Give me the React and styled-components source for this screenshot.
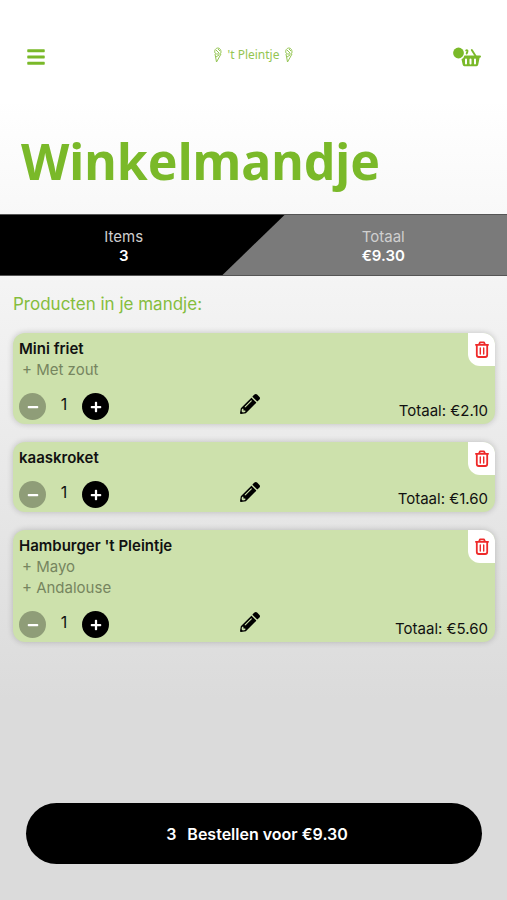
import React from "react";
import styled, { createGlobalStyle } from "styled-components";
import { FaPencilAlt, FaPlus, FaMinus, FaBars } from "react-icons/fa";

const GlobalStyle = createGlobalStyle`
  *, *::before, *::after { box-sizing: border-box; }
  body {
    margin: 0;
    font-family: Inter, "Liberation Sans", sans-serif;
    font-size: 15px;
    line-height: 20px;
    color: #111;
  }
  h1, h2, h3, p, ul { margin: 0; padding: 0; }
  button { font: inherit; border: 0; padding: 0; cursor: pointer; }
`;

const Page = styled.div`
  min-height: 100vh;
  display: flex;
  flex-direction: column;
  background: linear-gradient(#fff 100px, #dbdbdb 700px);
`;

const TopBar = styled.header`
  display: grid;
  grid-template-columns: 1fr auto 1fr;
  align-items: center;
  height: 104px;
  padding: 10px 26px 0;
  background: #fff;
  color: #7ab929;
`;

const IconButton = styled.button`
  display: flex;
  align-items: center;
  justify-self: ${(p) => p.$side};
  background: none;
  color: inherit;
`;

const Brand = styled.a`
  display: flex;
  align-items: center;
  gap: 6px;
  padding-bottom: 4px;
  font: 12px/16px "Noto Sans", sans-serif;
  color: #94c552;
  text-decoration: none;
`;

const Title = styled.h1`
  padding: 25px 21px 21px;
  font: 700 50px/64px "Noto Sans", sans-serif;
  color: #7ab929;
`;

const Summary = styled.section`
  display: grid;
  grid-template-columns: 1fr 1fr;
  height: 62px;
  border: solid #555;
  border-width: 1px 0;
  background: #7a7a7a;
  position: relative;
  isolation: isolate;
  &::before {
    content: "";
    position: absolute;
    z-index: -1;
    inset: 0 calc(50% - 31px) 0 0;
    background: #000;
    clip-path: polygon(0 0, 100% 0, calc(100% - 62px) 100%, 0 100%);
  }
`;

const Figure = styled.div`
  display: flex;
  flex-direction: column;
  align-items: center;
  padding-top: 12px;
  padding-left: ${(p) => (p.$end ? "6px" : "0")};
  padding-right: ${(p) => (p.$end ? "0" : "6px")};
  line-height: 19px;
  color: #cfcfcf;
  strong { font-weight: 600; color: #fff; }
`;

const Basket = styled.main`
  flex: 1;
  padding: 17px 12px 24px 13px;
`;

const Subtitle = styled.h2`
  font-size: 17px;
  font-weight: 400;
  line-height: 22px;
  color: #85bd3c;
`;

const List = styled.ul`
  display: flex;
  flex-direction: column;
  gap: 18px;
  padding-top: 18px;
  list-style: none;
`;

const Card = styled.li`
  position: relative;
  padding: 6px 7px 4px 6px;
  border-radius: 12px;
  background: #cde1ac;
  box-shadow: 0 0 6px rgba(0, 0, 0, 0.2);
`;

const Name = styled.h3`
  font-size: 15px;
  font-weight: 600;
  line-height: 20px;
`;

const Option = styled.p`
  padding-left: 3px;
  line-height: 21px;
  color: #76855f;
`;

const Controls = styled.div`
  display: grid;
  grid-template-columns: 1fr auto 1fr;
  align-items: center;
  height: 40px;
  padding-top: 13px;
`;

const Stepper = styled.div`
  display: flex;
  align-items: center;
`;

const Count = styled.span`
  width: 36px;
  padding-bottom: 5px;
  text-align: center;
  font-size: 16px;
`;

const Round = styled.button`
  display: grid;
  place-items: center;
  width: 27px;
  height: 27px;
  border-radius: 50%;
  background: ${(p) => (p.$muted ? "#8f9d78" : "#000")};
  color: #fff;
`;

const EditButton = styled.button`
  display: flex;
  margin-right: 8px;
  padding-bottom: 5px;
  background: none;
  color: #000;
`;

const LineTotal = styled.span`
  align-self: end;
  justify-self: end;
  line-height: 18px;
`;

const RemoveButton = styled.button`
  position: absolute;
  top: 0;
  right: 0;
  display: grid;
  place-items: center;
  width: 27px;
  height: 33px;
  border-radius: 0 12px 0 12px;
  background: #fff;
  color: #ee2a2a;
`;

const Footer = styled.footer`
  padding: 0 25px 36px 26px;
`;

const OrderButton = styled.button`
  display: flex;
  align-items: center;
  justify-content: center;
  gap: 11px;
  width: 100%;
  height: 61px;
  padding-left: 6px;
  border-radius: 31px;
  background: #000;
  color: #fff;
  font-size: 16px;
  font-weight: 600;
`;

const ConeIcon = () => (
  <svg width="8" height="16" viewBox="0 0 8 16" fill="none" stroke="currentColor" aria-hidden="true">
    <path d="M1 6C0 3 2 1 4 1s3 2 3 4-1 2-3 2-2 0-3-1Z" />
    <path d="M2 3l3 3M4 2l2 2" />
    <path d="M1 7l1.5 8L7 7M2 10l3-2" />
  </svg>
);

const BasketIcon = () => (
  <svg width="28" height="20" viewBox="0 0 28 20" fill="none" aria-hidden="true">
    <circle cx="5.5" cy="6" r="5.4" fill="currentColor" />
    <path d="M13.2 3.4Q14.8 3 14.4 4.6L13.7 6.5M18.8 3 22.6 9" stroke="currentColor" strokeWidth="1.9" strokeLinecap="round" />
    <path d="M11.5 8.6H27q1 0 1 1t-1 1.2h-.4l-1.4 7q-.3 1.4-1.7 1.4H11.4q-1.4 0-1.7-1.4L8.5 12.2q2.3-1 3-3.6Z" fill="currentColor" />
    <path d="M13 12.4v4.2M17.5 12.4v4.2M22 12.4v4.2" stroke="#fff" strokeWidth="2" strokeLinecap="round" />
  </svg>
);

const TrashIcon = () => (
  <svg width="14" height="17" viewBox="0 0 14 17" fill="none" stroke="currentColor" strokeLinecap="round" strokeLinejoin="round" aria-hidden="true">
    <path d="M.9 3.8h12.2M4 3.6 5 1.3h4l1 2.3" strokeWidth="1.8" />
    <path d="M1.8 4.2V14q0 2 2 2h6.4q2 0 2-2V4.2" strokeWidth="1.8" />
    <path d="M5.3 7v6M8.7 7v6" strokeWidth="1.4" />
  </svg>
);

const products = [
  { name: "Mini friet", options: ["Met zout"], count: 1, total: "€2.10" },
  { name: "kaaskroket", options: [], count: 1, total: "€1.60" },
  { name: "Hamburger 't Pleintje", options: ["Mayo", "Andalouse"], count: 1, total: "€5.60" },
];

function Product({ name, options, count, total }) {
  return (
    <Card>
      <Name>{name}</Name>
      {options.map((o) => (
        <Option key={o}>+ {o}</Option>
      ))}
      <Controls>
        <Stepper>
          <Round $muted aria-label="Minder"><FaMinus size={12} /></Round>
          <Count>{count}</Count>
          <Round aria-label="Meer"><FaPlus size={12} /></Round>
        </Stepper>
        <EditButton aria-label="Bewerken"><FaPencilAlt size={20} /></EditButton>
        <LineTotal>Totaal: {total}</LineTotal>
      </Controls>
      <RemoveButton aria-label="Verwijderen"><TrashIcon /></RemoveButton>
    </Card>
  );
}

export default function App() {
  return (
    <Page>
      <GlobalStyle />
      <TopBar>
        <IconButton $side="start" aria-label="Menu"><FaBars size={20} /></IconButton>
        <Brand href="#"><ConeIcon />'t Pleintje<ConeIcon /></Brand>
        <IconButton $side="end" aria-label="Winkelmandje"><BasketIcon /></IconButton>
      </TopBar>
      <Title>Winkelmandje</Title>
      <Summary>
        <Figure><span>Items</span><strong>3</strong></Figure>
        <Figure $end><span>Totaal</span><strong>€9.30</strong></Figure>
      </Summary>
      <Basket>
        <Subtitle>Producten in je mandje:</Subtitle>
        <List>
          {products.map((p) => <Product key={p.name} {...p} />)}
        </List>
      </Basket>
      <Footer>
        <OrderButton><span>3</span><span>Bestellen voor €9.30</span></OrderButton>
      </Footer>
    </Page>
  );
}
